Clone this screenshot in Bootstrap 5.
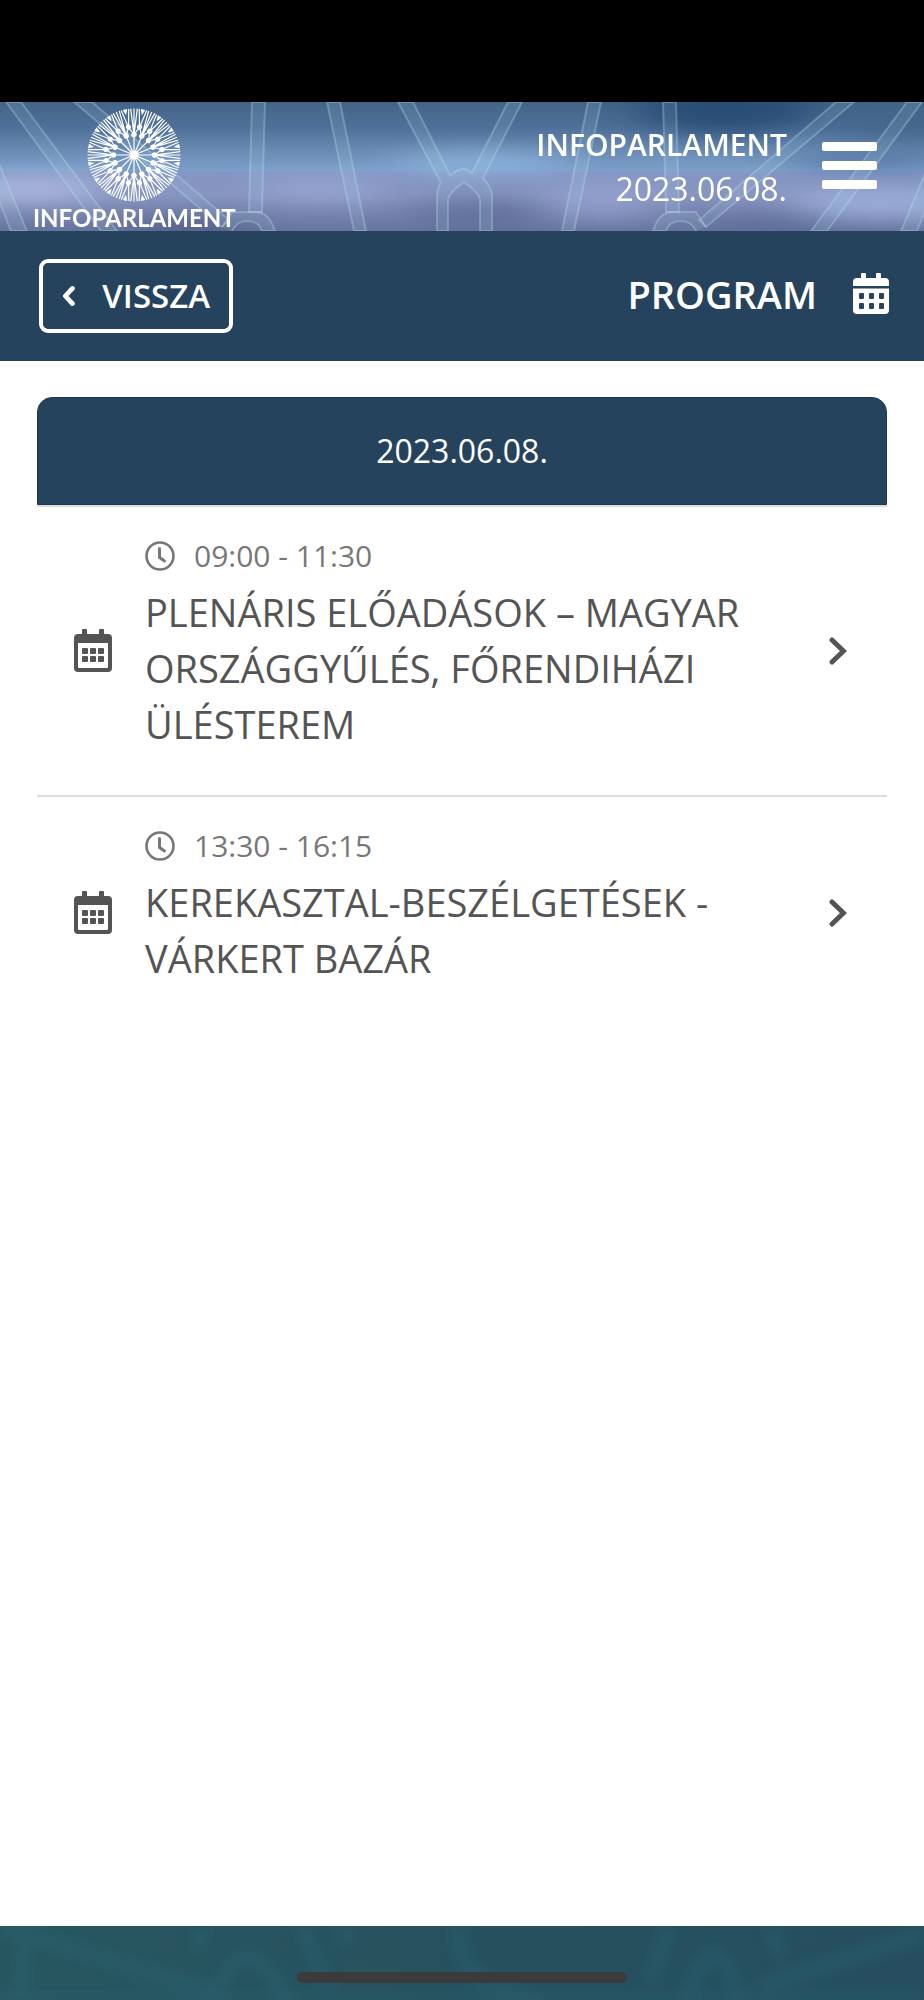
<!DOCTYPE html>
<html lang="hu">
<head>
<meta charset="utf-8">
<meta name="viewport" content="width=device-width, initial-scale=1">
<title>Infoparlament – Program</title>
<link href="https://cdn.jsdelivr.net/npm/bootstrap@5.3.0/dist/css/bootstrap.min.css" rel="stylesheet">
<style>
  :root { --navy: #26435d; --ink: #545454; --muted-ink: #777; }
  body { font-family: "Open Sans", "Noto Sans", sans-serif; background: #fff; }
  .status-area { height: 102px; background: #000; }

  .site-header { height: 129px; color: #fff; background: #6d88b4; }
  .scene { z-index: 0; }
  .header-row { z-index: 1; }
  .brand { padding: 5px 0 0 33px; color: #fff; }
  .brand svg { width: 96px; height: 96px; flex-shrink: 0; }
  .brand-name { font: 700 24px/30px Lato, sans-serif; }
  .event-title { font-size: 30px; font-weight: 600; line-height: 44px; }
  .event-date { font-size: 32px; line-height: 44px; }
  .header-end { gap: 34px; padding-right: 47px; }
  .menu-btn { width: 56px; height: 50px; }

  .page-bar { height: 130px; padding: 0 35px 0 39px; background: var(--navy); color: #fff; }
  .back-btn { height: 74px; width: 194px; padding: 0 19px; gap: 27px; border: 4px solid #fff; border-radius: 9px; color: #fff; font-size: 33px; font-weight: 600; line-height: 40px; }
  .back-btn:hover { color: #fff; border-color: #fff; }
  .page-title { font-size: 38px; font-weight: 600; line-height: 56px; }
  .page-heading { gap: 36px; padding-bottom: 4px; }

  .schedule { margin: 36px 37px 0; }
  .day-head { height: 108px; border-radius: 15px 15px 0 0; background: var(--navy); border: 1px solid #1d3850; color: #fff; font-size: 32px; font-weight: 400; }
  .slot { padding: 21px 36px 22px; border: 0 solid #dcdcdc; border-top-width: 2px; color: var(--ink); text-decoration: none; }
  .slot-icon { width: 40px; margin-right: 32px; }
  .slot-text { padding-bottom: 21px; }
  .slot-time { gap: 19px; color: var(--muted-ink); font-size: 30px; line-height: 56px; }
  .slot-name { font-size: 38px; font-weight: 400; line-height: 56px; }
  .slot-arrow { width: 18px; margin-right: 4px; }

  .site-footer { height: 74px; background: #27535f; }
  .home-bar { left: 50%; bottom: 17px; width: 330px; height: 11px; margin-left: -165px; border-radius: 6px; background: #3b3b3b; }
</style>
</head>
<body>
<svg class="d-none" aria-hidden="true">
  <symbol id="i-calendar" viewBox="0 0 38 44">
    <path fill="currentColor" fill-rule="evenodd" d="M9 0h3q1 0 1 1v4h12V1q0-1 1-1h3q1 0 1 1v4h4q4 0 4 4v30q0 4-4 4H4q-4 0-4-4V9q0-4 4-4h4V1q0-1 1-1zM4 14v24q0 1 1 1h28q1 0 1-1V14z"/>
    <g fill="currentColor"><rect x="8" y="19" width="6" height="6" rx="1"/><rect x="16" y="19" width="6" height="6" rx="1"/><rect x="24" y="19" width="6" height="6" rx="1"/><rect x="8" y="27" width="6" height="6" rx="1"/><rect x="16" y="27" width="6" height="6" rx="1"/><rect x="24" y="27" width="6" height="6" rx="1"/></g>
  </symbol>
  <symbol id="i-clock" viewBox="0 0 30 30">
    <circle cx="15" cy="15" r="13.5" fill="none" stroke="currentColor" stroke-width="2.6"/>
    <path d="M14.5 7.500v9l5 3.500" fill="none" stroke="currentColor" stroke-width="3" stroke-linecap="round" stroke-linejoin="round"/>
  </symbol>
  <symbol id="i-chevron" viewBox="0 0 18 28">
    <path d="M3 3l11.500 11L3 25" fill="none" stroke="currentColor" stroke-width="5" stroke-linecap="round"/>
  </symbol>
</svg>

<div class="min-vh-100 d-flex flex-column">
  <div class="status-area"></div>

  <header class="site-header position-relative overflow-hidden">
    <svg class="scene position-absolute top-0 start-0 w-100 h-100" viewBox="0 0 924 129" preserveAspectRatio="none" aria-hidden="true">
      <defs>
        <linearGradient id="sky" x2="0" y2="1">
          <stop offset="0" stop-color="#446387"/><stop offset=".2" stop-color="#4f7099"/><stop offset=".38" stop-color="#6a8bb4"/><stop offset=".53" stop-color="#7c9fca"/>
          <stop offset=".55" stop-color="#8496c4"/><stop offset=".72" stop-color="#8795c0"/><stop offset="1" stop-color="#67749e"/>
        </linearGradient>
        <filter id="soft" x="-60%" y="-150%" width="220%" height="400%"><feGaussianBlur stdDeviation="24 10"/></filter>
        <filter id="glow"><feGaussianBlur stdDeviation=".7"/></filter>
        <g id="beams">
          <path d="M-10 75L11 129H27L-10 40zM6 0L101 129H117L21 0zM74 0L222 125L229 118L92 0zM252 0L249 110L262 110L265 0zM327 0L354 129H366L340 0z"/>
          <path d="M232 129Q237 119 247 119Q259 119 262 129H275Q270 112 258 110H232L222 125"/>
        </g>
      </defs>
      <rect width="924" height="129" fill="url(#sky)"/>
      <g>
        <ellipse cx="725" cy="8" rx="90" ry="24" fill="#24466f" opacity=".8" filter="url(#soft)"/>
        <ellipse cx="900" cy="15" rx="60" ry="28" fill="#3f6285" opacity=".6" filter="url(#soft)"/>
        <ellipse cx="870" cy="58" rx="80" ry="10" fill="#506f9b" opacity=".7" filter="url(#soft)"/>
        <ellipse cx="480" cy="60" rx="90" ry="10" fill="#9bc4ee" opacity=".6" filter="url(#soft)"/>
        <ellipse cx="30" cy="87" rx="70" ry="14" fill="#c3caee" opacity=".6" filter="url(#soft)"/>
        <ellipse cx="320" cy="86" rx="60" ry="12" fill="#a6b3e2" opacity=".5" filter="url(#soft)"/>
        <ellipse cx="190" cy="128" rx="60" ry="13" fill="#4b5580" opacity=".6" filter="url(#soft)"/>
        <ellipse cx="480" cy="112" rx="70" ry="15" fill="#566690" opacity=".6" filter="url(#soft)"/>
        <ellipse cx="600" cy="100" rx="55" ry="18" fill="#a0acde" opacity=".5" filter="url(#soft)"/>
        <ellipse cx="880" cy="102" rx="90" ry="14" fill="#a9bbe9" opacity=".7" filter="url(#soft)"/>
        <ellipse cx="765" cy="125" rx="60" ry="10" fill="#596894" opacity=".7" filter="url(#soft)"/>
      </g>
      <g fill="#a8d7e6" fill-opacity=".13" stroke="#c0e0f0" stroke-opacity=".3" stroke-width="2" filter="url(#glow)">
        <use href="#beams"/><use href="#beams" transform="matrix(-1 0 0 1 928 0)"/>
        <path d="M398 0L441 81Q437 86 437 94V129H448V98Q449 90 464 80Q479 90 480 98V129H492V94Q492 86 483 76L522 0H508L472 71Q464 62 450 73L413 0z"/>
      </g>
    </svg>
    <div class="header-row position-relative h-100 d-flex justify-content-between">
      <a href="#" class="brand d-flex flex-column align-items-center text-decoration-none">
        <svg viewBox="-48 -48 96 96" aria-hidden="true">
          <defs>
            <g id="ray" stroke="#fff" fill="#fff" stroke-width="1.200">
              <path d="M0 0V-46.500M0-20L-3.300-46.400M0-20L3.300-46.400" fill="none"/>
              <circle cy="-20.500" r="2.700" stroke="none"/>
              <g transform="rotate(11.250)">
                <path d="M0-28L-3.800-46.200M0-28L3.800-46.200M0-28L-4-20.300M0-28L4-20.300" fill="none"/>
                <circle cy="-28.500" r="2.600" stroke="none"/>
                <path d="M-2.300-46.400H2.300L0-40.500z" stroke="none"/>
              </g>
            </g>
          </defs>
          <use href="#ray"/><use href="#ray" transform="rotate(22.500)"/><use href="#ray" transform="rotate(45)"/><use href="#ray" transform="rotate(67.500)"/>
          <use href="#ray" transform="rotate(90)"/><use href="#ray" transform="rotate(112.500)"/><use href="#ray" transform="rotate(135)"/><use href="#ray" transform="rotate(157.500)"/>
          <use href="#ray" transform="rotate(180)"/><use href="#ray" transform="rotate(202.500)"/><use href="#ray" transform="rotate(225)"/><use href="#ray" transform="rotate(247.500)"/>
          <use href="#ray" transform="rotate(270)"/><use href="#ray" transform="rotate(292.500)"/><use href="#ray" transform="rotate(315)"/><use href="#ray" transform="rotate(337.500)"/>
          <circle r="4.500" fill="#fff"/>
        </svg>
        <span class="brand-name">INFOPARLAMENT</span>
      </a>
      <div class="header-end d-flex align-items-center">
        <div class="text-end">
          <div class="event-title">INFOPARLAMENT</div>
          <div class="event-date">2023.06.08.</div>
        </div>
        <button type="button" class="menu-btn btn p-0 border-0 d-flex" aria-label="Menü">
          <svg width="56" height="50" viewBox="0 0 56 50" fill="#fff"><rect x="1" width="55" height="9" rx="2"/><rect x="1" y="19" width="55" height="9" rx="2"/><rect x="1" y="38" width="55" height="9" rx="2"/></svg>
        </button>
      </div>
    </div>
  </header>

  <div class="page-bar d-flex align-items-center justify-content-between">
    <button type="button" class="back-btn btn d-flex align-items-center">
      <svg width="14" height="22" viewBox="0 0 14 22" aria-hidden="true"><path d="M11 3L3.500 11L11 19" fill="none" stroke="#fff" stroke-width="5" stroke-linecap="round" stroke-linejoin="round"/></svg>
      <span>VISSZA</span>
    </button>
    <div class="page-heading d-flex align-items-center">
      <h1 class="page-title mb-0">PROGRAM</h1>
      <svg width="36" height="42" viewBox="0 0 36 42" fill="#fff" aria-hidden="true">
        <path d="M9 0h3q1 0 1 1v4h10V1q0-1 1-1h3q1 0 1 1v4h4q4 0 4 4v4H0V9q0-4 4-4h4V1q0-1 1-1z"/>
        <path fill-rule="evenodd" d="M0 15.500h36V37q0 4-4 4H4q-4 0-4-4zM6 21v4q0 1 1 1h3q1 0 1-1v-4q0-1-1-1H7q-1 0-1 1zm10 0v4q0 1 1 1h3q1 0 1-1v-4q0-1-1-1h-3q-1 0-1 1zm10 0v4q0 1 1 1h3q1 0 1-1v-4q0-1-1-1h-3q-1 0-1 1zM6 31v4q0 1 1 1h3q1 0 1-1v-4q0-1-1-1H7q-1 0-1 1zm10 0v4q0 1 1 1h3q1 0 1-1v-4q0-1-1-1h-3q-1 0-1 1zm10 0v4q0 1 1 1h3q1 0 1-1v-4q0-1-1-1h-3q-1 0-1 1z"/>
      </svg>
    </div>
  </div>

  <main class="flex-grow-1">
    <section class="schedule">
      <h2 class="day-head mb-0 d-flex align-items-center justify-content-center">2023.06.08.</h2>
      <div class="list-group list-group-flush">
        <a href="#" class="slot d-flex align-items-center">
          <svg class="slot-icon flex-shrink-0" height="44" aria-hidden="true"><use href="#i-calendar"/></svg>
          <div class="slot-text flex-grow-1">
            <div class="slot-time d-flex align-items-center"><svg width="30" height="30" aria-hidden="true"><use href="#i-clock"/></svg>09:00 - 11:30</div>
            <h3 class="slot-name mb-0">PLENÁRIS ELŐADÁSOK – MAGYAR ORSZÁGGYŰLÉS, FŐRENDIHÁZI ÜLÉSTEREM</h3>
          </div>
          <svg class="slot-arrow flex-shrink-0" height="28" aria-hidden="true"><use href="#i-chevron"/></svg>
        </a>
        <a href="#" class="slot d-flex align-items-center">
          <svg class="slot-icon flex-shrink-0" height="44" aria-hidden="true"><use href="#i-calendar"/></svg>
          <div class="slot-text flex-grow-1">
            <div class="slot-time d-flex align-items-center"><svg width="30" height="30" aria-hidden="true"><use href="#i-clock"/></svg>13:30 - 16:15</div>
            <h3 class="slot-name mb-0">KEREKASZTAL-BESZÉLGETÉSEK - VÁRKERT BAZÁR</h3>
          </div>
          <svg class="slot-arrow flex-shrink-0" height="28" aria-hidden="true"><use href="#i-chevron"/></svg>
        </a>
      </div>
    </section>
  </main>

  <footer class="site-footer position-relative overflow-hidden">
    <svg class="w-100 h-100 d-block" viewBox="0 0 924 74" preserveAspectRatio="none" aria-hidden="true">
      <defs>
        <linearGradient id="sea"><stop offset="0" stop-color="#28575f"/><stop offset=".5" stop-color="#27515e"/><stop offset="1" stop-color="#264e60"/></linearGradient>
        <filter id="haze" x="-10%" y="-50%" width="120%" height="200%"><feGaussianBlur stdDeviation="7"/></filter>
      </defs>
      <rect width="924" height="74" fill="url(#sea)"/>
      <g fill="none" stroke="#2a6070" stroke-opacity=".6" stroke-width="13" filter="url(#haze)">
        <path d="M0 0L210 66M215 80Q240-20 290 80M300 0L330 60M205 0L195 25M345 0V20M460 0Q450 60 540 74M924 8L760 60M740 80Q715-25 685 80M670 0L650 55M770 0L780 30M20 74L24 20"/>
        <path d="M0 74H924" stroke-opacity=".4"/>
      </g>
    </svg>
    <div class="home-bar position-absolute"></div>
  </footer>
</div>
<script src="https://cdn.jsdelivr.net/npm/bootstrap@5.3.0/dist/js/bootstrap.bundle.min.js"></script>
</body>
</html>
